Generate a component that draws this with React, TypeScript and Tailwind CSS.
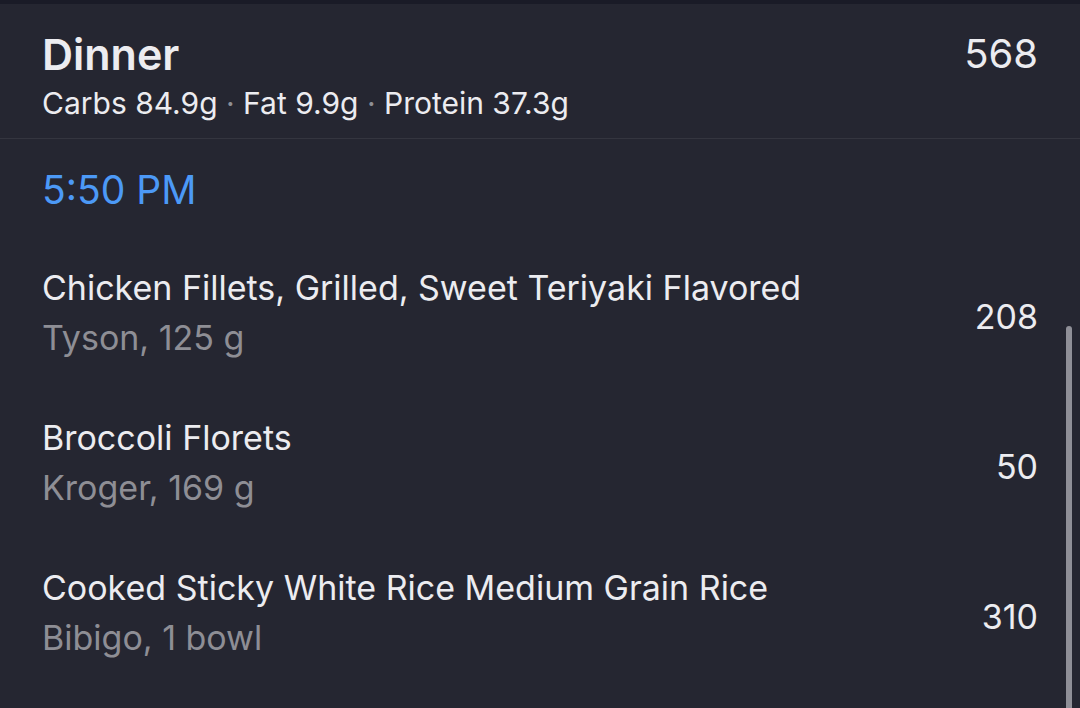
import React from 'react';

interface FoodEntry {
  name: string;
  detail: string;
  calories: number;
}

const entries: FoodEntry[] = [
  { name: 'Chicken Fillets, Grilled, Sweet Teriyaki Flavored', detail: 'Tyson, 125 g', calories: 208 },
  { name: 'Broccoli Florets', detail: 'Kroger, 169 g', calories: 50 },
  { name: 'Cooked Sticky White Rice Medium Grain Rice', detail: 'Bibigo, 1 bowl', calories: 310 },
];

const FoodRow: React.FC<{ entry: FoodEntry }> = ({ entry }) => (
  <div className="flex items-center justify-between h-[150px]">
    <div className="flex flex-col">
      <div className="text-[34px] leading-[50px] text-[#ececf0]">{entry.name}</div>
      <div className="text-[34px] leading-[50px] text-[#8e8e95]">{entry.detail}</div>
    </div>
    <div className="text-[34px] leading-[50px] mt-[8px] text-[#ececf0]">{entry.calories}</div>
  </div>
);

export default function App() {
  return (
    <div className="w-[1080px] h-[708px] overflow-hidden bg-[#252631] relative" style={{ fontFamily: 'Inter, "Noto Sans", sans-serif' }}>
      {/* top strip */}
      <div className="h-[4px] bg-[#1a1b27]" />

      {/* Meal header */}
      <div className="flex justify-between px-[42px] pt-[26px] h-[135px] border-b border-[#34353f]">
        <div className="flex flex-col">
          <div className="text-[43px] leading-[48px] font-semibold text-[#ececf0]">Dinner</div>
          <div className="text-[30px] leading-[40px] mt-[5px] text-[#ececf0] whitespace-pre">
            Carbs 84.9g <span className="text-[#8e8e95]">·</span> Fat 9.9g <span className="text-[#8e8e95]">·</span> Protein 37.3g
          </div>
        </div>
        <div className="text-[40px] leading-[48px] text-[#ececf0]">568</div>
      </div>

      {/* Time group */}
      <div className="px-[42px]">
        <div className="text-[39px] leading-[50px] text-[#4c99f6] pt-[26px] pb-[23px]">5:50 PM</div>
        <div>
          {entries.map((e) => (
            <FoodRow key={e.name} entry={e} />
          ))}
        </div>
      </div>

      {/* scroll indicator */}
      <div className="absolute right-[8px] top-[326px] w-[6px] h-[400px] rounded-full bg-[#8f8f97]" />
    </div>
  );
}
